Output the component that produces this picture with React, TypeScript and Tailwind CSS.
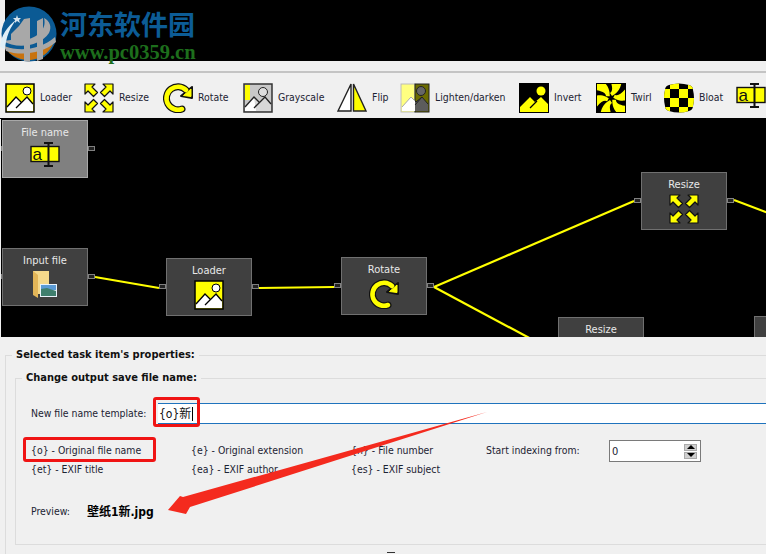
const uiFont = "[font-family:'DejaVu_Sans_Condensed','Liberation_Sans','Noto_Sans_CJK_SC',sans-serif]";

function Photo({ bg, fill = 'white' }: { bg: string; fill?: string }) {
  return (
    <>
      <rect x="1" y="1" width="28" height="28" fill={bg} stroke="black" strokeWidth="1.5" />
      <circle cx="22" cy="8" r="4" fill={fill} stroke="black" />
      <path d="M2 27 L2 24 L11 14 L16 19 L22 14 L28 21 L28 28 L2 28Z" fill={fill} />
      <path d="M2 24 L11 14 L16 19 M11 25 L22 14 L28 21" fill="none" stroke="black" strokeWidth="1.3" />
    </>
  );
}

function LoaderIcon() {
  return (
    <svg width="30" height="30" viewBox="0 0 30 30">
      <Photo bg="#ffff00" />
    </svg>
  );
}

function InvertIcon() {
  return (
    <svg width="30" height="30" viewBox="0 0 30 30">
      <rect x="0" y="0" width="30" height="30" fill="black" />
      <circle cx="22" cy="8" r="4.5" fill="#ffff00" />
      <path d="M1 29 L1 24 L11 14 L16 19 L22 14 L29 21 L29 29Z" fill="#ffff00" />
      <path d="M11 25 L18 18" stroke="black" strokeWidth="1.3" />
    </svg>
  );
}

function GrayscaleIcon() {
  return (
    <svg width="30" height="30" viewBox="0 0 30 30">
      <rect x="1" y="1" width="28" height="28" fill="#c8c8c8" stroke="#333" strokeWidth="1.5" />
      <rect x="2" y="2" width="5" height="15" fill="#ffff00" />
      <circle cx="20" cy="9" r="4.5" fill="#ddd" stroke="#222" />
      <path d="M2 28 L2 24 L11 14 L16 19 L22 14 L28 21 L28 28Z" fill="#d8d8d8" />
      <path d="M2 28 L2 24 L11 14 L13 28Z" fill="white" />
      <path d="M2 24 L11 14 L16 19 M11 25 L22 14 L28 21" fill="none" stroke="#222" strokeWidth="1.3" />
    </svg>
  );
}

function FlipIcon() {
  return (
    <svg width="30" height="30" viewBox="0 0 30 30">
      <path d="M14 1 L14 28 L1 28Z" fill="white" stroke="#222" strokeWidth="1.4" />
      <path d="M16.5 1 L16.5 28 L29 28Z" fill="#ffff00" stroke="#222" strokeWidth="1.4" />
    </svg>
  );
}

function LightenIcon() {
  return (
    <svg width="30" height="30" viewBox="0 0 30 30">
      <rect x="1" y="1" width="14" height="28" fill="#ffff80" stroke="#bbb" />
      <rect x="15" y="1" width="14" height="28" fill="#6b6b00" stroke="#222" />
      <circle cx="21" cy="8" r="4.5" fill="#666" stroke="#222" />
      <path d="M2 28 L2 24 L11 14 L15 18 L15 28Z" fill="white" />
      <path d="M15 28 L15 18 L16 19 L22 14 L28 21 L28 28Z" fill="#5c5c5c" />
      <path d="M2 24 L11 14 L15 18" fill="none" stroke="#aaa" />
      <path d="M15 18 L16 19 L22 14 L28 21 M15 22 L22 14" fill="none" stroke="#222" />
    </svg>
  );
}

function ResizeIcon() {
  const arrow = 'M1 1 L11 1 L8 4 L13.5 9.5 L9.5 13.5 L4 8 L1 11Z';
  return (
    <svg width="30" height="30" viewBox="0 0 30 30">
      {['', 'translate(30 0) scale(-1 1)', 'translate(0 30) scale(1 -1)', 'translate(30 30) scale(-1 -1)'].map((t) => (
        <path key={t} d={arrow} transform={t} fill="#ffff00" stroke="#111" strokeWidth="1.2" strokeLinejoin="round" />
      ))}
    </svg>
  );
}

function RotateIcon() {
  const arc = 'M19 26 A11.5 11.5 0 1 1 23 7';
  return (
    <svg width="30" height="30" viewBox="0 0 30 30">
      <path d={arc} fill="none" stroke="#111" strokeWidth="7" strokeLinecap="round" />
      <path d="M29 4 L29 15 L18 13Z" fill="#111" stroke="#111" strokeWidth="2" strokeLinejoin="round" />
      <path d={arc} fill="none" stroke="#ffff00" strokeWidth="4.6" strokeLinecap="round" />
      <path d="M28 6 L28 13.5 L20.5 12.5Z" fill="#ffff00" stroke="#ffff00" />
    </svg>
  );
}

function TwirlIcon() {
  const angles = [0, 60, 120, 180, 240, 300];
  return (
    <svg width="30" height="30" viewBox="0 0 30 30">
      <defs>
        <clipPath id="twirl-box">
          <rect x="1" y="1" width="28" height="28" />
        </clipPath>
      </defs>
      <rect x="0" y="0" width="30" height="30" fill="black" />
      <g clipPath="url(#twirl-box)">
        {angles.map((a) => (
          <path
            key={a}
            d="M14 10 C17 8 17 4 13 -6 L26 -6 C26 3 23 8 19 11 L16 13Z"
            fill="#ffff00"
            transform={`rotate(${a} 15 15)`}
          />
        ))}
      </g>
    </svg>
  );
}

function BloatIcon() {
  const cells = [
    [6, 0, 9, 6], [24, 0, 6, 6],
    [0, 6, 6, 9], [15, 6, 9, 9],
    [6, 15, 9, 9], [24, 15, 6, 9],
    [0, 24, 6, 6], [15, 24, 9, 6],
  ];
  return (
    <svg width="30" height="30" viewBox="0 0 30 30">
      <defs>
        <clipPath id="bloat-shape">
          <path d="M5 2 Q15 -1 25 2 Q29 3 29 7 Q31 15 29 23 Q29 27 25 28 Q15 31 5 28 Q1 27 1 23 Q-1 15 1 7 Q1 3 5 2Z" />
        </clipPath>
      </defs>
      <g clipPath="url(#bloat-shape)">
        <rect x="0" y="0" width="30" height="30" fill="black" />
        {cells.map(([x, y, w, h]) => (
          <rect key={`${x}-${y}`} x={x} y={y} width={w} height={h} fill="#ffff00" />
        ))}
      </g>
    </svg>
  );
}

function NameIcon() {
  return (
    <svg width="30" height="30" viewBox="0 0 30 30" className="overflow-visible">
      <rect x="1" y="4.5" width="28" height="15" fill="#ffff00" stroke="#111" strokeWidth="1.4" />
      <text x="2.5" y="17.5" fontSize="17" fontFamily="Liberation Sans, sans-serif" fill="#111">
        a
      </text>
      <path d="M14 1 L23 1 M18.5 1 L18.5 24 M14 24 L23 24" stroke="#111" strokeWidth="2" fill="none" />
    </svg>
  );
}

function FolderIcon() {
  return (
    <svg width="30" height="30" viewBox="0 0 30 30">
      <path d="M3 1 L19 1 L19 24 L3 24Z" fill="#f5d98b" />
      <path d="M3 1 L8 5 L8 28 L3 25Z" fill="#e3b658" />
      <rect x="10" y="14" width="17" height="13" fill="#e8f2fa" />
      <rect x="11" y="15" width="15" height="5" fill="#5b9bd5" />
      <path d="M11 19 L17 18 L26 21 L26 26 L11 26Z" fill="#3f7f6e" />
    </svg>
  );
}

const toolbarItems = [
  { label: 'Loader', icon: <LoaderIcon />, width: 'w-[79px]' },
  { label: 'Resize', icon: <ResizeIcon />, width: 'w-[79px]' },
  { label: 'Rotate', icon: <RotateIcon />, width: 'w-[80px]' },
  { label: 'Grayscale', icon: <GrayscaleIcon />, width: 'w-[94px]' },
  { label: 'Flip', icon: <FlipIcon />, width: 'w-[63px]' },
  { label: 'Lighten/darken', icon: <LightenIcon />, width: 'w-[119px]' },
  { label: 'Invert', icon: <InvertIcon />, width: 'w-[77px]' },
  { label: 'Twirl', icon: <TwirlIcon />, width: 'w-[68px]' },
  { label: 'Bloat', icon: <BloatIcon />, width: 'w-[72px]' },
  { label: '', icon: <NameIcon />, width: 'w-[30px]' },
];

function Node({
  label,
  pos,
  icon,
  selected = false,
}: {
  label: string;
  pos: string;
  icon?: React.ReactNode;
  selected?: boolean;
}) {
  return (
    <div className={`absolute w-[86px] h-[58px] ${pos}`}>
      <div
        className={`flex h-full w-full flex-col items-center border pt-[4px] text-[11px] leading-[16px] text-[#e8e8e8] ${
          selected ? 'border-[#a8a8a8] bg-[#808080]' : 'border-[#707070] bg-[#404040]'
        }`}
      >
        <span>{label}</span>
        <div className="mt-[1px]">{icon}</div>
      </div>
      <span className="absolute left-[-7px] top-[26px] h-[5px] w-[7px] border border-[#808080] bg-[#222]" />
      <span className="absolute right-[-7px] top-[26px] h-[5px] w-[7px] border border-[#808080] bg-[#222]" />
    </div>
  );
}

function Canvas() {
  return (
    <div className="relative ml-[1px] h-[218px] overflow-hidden bg-black">
      <svg className="absolute left-0 top-0" width="765" height="218">
        <g stroke="#ffff00" strokeWidth="2.2" fill="none">
          <path d="M94 158 L158 169" />
          <path d="M258 169 L333 168" />
          <path d="M433 168 L633 82" />
          <path d="M433 168 L534 222" />
          <path d="M733 81 L770 95" />
        </g>
      </svg>
      <Node label="File name" pos="left-[1px] top-[1px]" icon={<NameIcon />} selected />
      <Node label="Input file" pos="left-[1px] top-[129px]" icon={<FolderIcon />} />
      <Node label="Loader" pos="left-[165px] top-[139px]" icon={<LoaderIcon />} />
      <Node label="Rotate" pos="left-[340px] top-[138px]" icon={<RotateIcon />} />
      <Node label="Resize" pos="left-[640px] top-[53px]" icon={<ResizeIcon />} />
      <Node label="Resize" pos="left-[557px] top-[198px]" />
      <Node label="" pos="left-[753px] top-[197px]" />
    </div>
  );
}

function Watermark() {
  return (
    <div className="absolute left-0 top-[5px] flex">
      <svg width="58" height="58" viewBox="0 0 58 58">
        <circle cx="29" cy="29" r="27.5" fill="#0b5a94" />
        <path d="M4 41 C20 48 40 46 55 33 A27.5 27.5 0 0 1 4 41Z" fill="#c8730f" />
        <path d="M3 36 C16 44 40 42 49 28 C52 22 50 16 44 13 C47 24 38 33 24 35 L24 14 L19 21 L11 29 L11 35 L3 36Z" fill="#a8a8a8" />
        <path d="M4 41 C20 47 40 45 55 32 L56 37 C42 49 20 51 6 46Z" fill="#a8a8a8" />
        <path d="M24 14 L30 13 L30 57 L24 56Z M37 16 L43 13 L43 54 L37 56Z" fill="#a8a8a8" />
        <path d="M0 42 C1 30 7 22 17 14 C10 22 6 32 5 44Z" fill="#dfeff7" />
        <path d="M17 10 L18 13 L21 13 L19 15 L20 18 L17 16 L15 18 L15 15 L13 13 L16 13Z" fill="#d5e3ee" />
      </svg>
      <div className="ml-[2px] flex flex-col">
        <span className="mt-[3px] text-[27px] leading-[32px] font-bold text-[#0c5c96] [font-family:'Noto_Sans_CJK_SC',sans-serif]">
          河东软件园
        </span>
        <span className="mt-[1px] text-[20.5px] leading-[22px] font-bold text-[#1d6e1c] [font-family:'Liberation_Serif',serif]">
          www.pc0359.cn
        </span>
      </div>
    </div>
  );
}

function Spinner() {
  return (
    <div className="ml-[27px] flex h-[22px] w-[92px] items-center justify-between border border-[#7a7a7a] bg-white pl-[2px] pr-[3px] text-[11px]">
      <span>0</span>
      <div className="flex flex-col gap-[1px]">
        <span className="flex h-[7px] w-[13px] items-center justify-center border border-[#aaa] bg-[#d0d0d0]">
          <span className="h-0 w-0 border-x-[4px] border-b-[4px] border-x-transparent border-b-black" />
        </span>
        <span className="flex h-[7px] w-[13px] items-center justify-center border border-[#aaa] bg-[#d0d0d0]">
          <span className="h-0 w-0 border-x-[4px] border-t-[4px] border-x-transparent border-t-black" />
        </span>
      </div>
    </div>
  );
}

function Properties() {
  return (
    <div className="pl-[5px] pt-[11px]">
      <fieldset className="h-[215px] border border-r-0 border-[#dcdcdc]">
        <legend className="ml-[6px] px-[4px] text-[11px] leading-[14px] font-bold text-[#111]">
          Selected task item's properties:
        </legend>
        <div className="ml-[9px] pt-[9px]">
          <fieldset className="h-[174px] border border-r-0 border-[#dcdcdc]">
            <legend className="ml-[6px] px-[4px] text-[11px] leading-[14px] font-bold text-[#111]">
              Change output save file name:
            </legend>
            <div className="pl-[15px]">
              <div className="mt-[18px] flex items-center text-[10.4px] text-[#1c2333]">
                <span className="w-[127px] whitespace-nowrap">New file name template:</span>
                <div className="flex h-[21px] flex-1 items-center border-y border-[#1f73bd] bg-white pl-[1px] text-[12px] text-[#111]">
                  <span>{'{o}新'}</span>
                  <span className="ml-[1px] h-[14px] w-px bg-black" />
                </div>
              </div>
              <div className="mt-[17px] flex text-[10.4px] leading-[19px] text-[#1c2333]">
                <div className="w-[160px]">
                  <div>{'{o} - Original file name'}</div>
                  <div>{'{et} - EXIF title'}</div>
                </div>
                <div className="w-[160px]">
                  <div>{'{e} - Original extension'}</div>
                  <div>{'{ea} - EXIF author'}</div>
                </div>
                <div className="w-[135px]">
                  <div>{'{n} - File number'}</div>
                  <div>{'{es} - EXIF subject'}</div>
                </div>
                <div className="-mt-[1px] flex h-[22px] items-center">
                  <span className="mb-[1px] w-[96px] whitespace-nowrap">Start indexing from:</span>
                  <Spinner />
                </div>
              </div>
              <div className="mt-[24px] flex items-center text-[10.4px] text-[#1c2333]">
                <span className="w-[56px]">Preview:</span>
                <span className="text-[12px] font-bold text-black">壁纸1新.jpg</span>
              </div>
            </div>
          </fieldset>
        </div>
      </fieldset>
    </div>
  );
}

export default function App() {
  return (
    <div className={`relative h-[554px] w-[766px] overflow-hidden bg-[#f0f0f0] ${uiFont}`}>
      <div className="ml-[5px] h-[61px] bg-black" />
      <div className="mt-[10px] h-[2px] bg-[#c4c4c4]" />
      <div className="flex h-[46px] items-center overflow-hidden border-b border-black pl-[5px] pt-[5px] text-[10.4px] text-[#1c2333]">
        {toolbarItems.map((item) => (
          <div key={item.icon.type.name} className={`flex shrink-0 items-center gap-[5px] ${item.width}`}>
            {item.icon}
            {item.label && <span className="whitespace-nowrap">{item.label}</span>}
          </div>
        ))}
      </div>
      <Canvas />
      <Properties />

      <Watermark />

      {/* bit of the splitter handle at the bottom edge */}
      <div className="absolute left-[387px] top-[552px] h-px w-[8px] bg-[#333]" />

      {/* annotations drawn over the screenshot */}
      <div className="absolute left-[153px] top-[397px] h-[30px] w-[47px] rounded-[3px] border-[3px] border-[#f01414]" />
      <div className="absolute left-[23px] top-[437px] h-[25px] w-[133px] rounded-[3px] border-[3px] border-[#f01414]" />
      <svg className="absolute left-0 top-0" width="766" height="554">
        <path d="M487 412 L190 507 L186 514 L168 510 L180 496 L183 497Z" fill="#f42a1e" />
      </svg>
    </div>
  );
}
